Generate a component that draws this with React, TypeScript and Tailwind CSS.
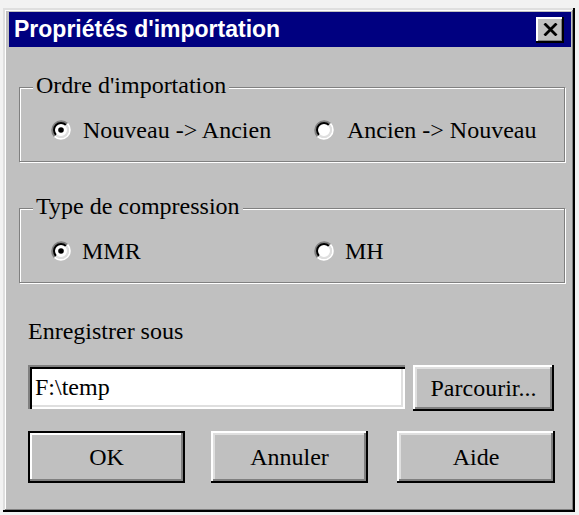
import React from "react";

const serif = "font-['Liberation_Serif','Times_New_Roman',serif]";

function Radio({ checked = false }: { checked?: boolean }) {
  return (
    <svg width="20" height="20" viewBox="0 0 20 20" className="shrink-0">
      <circle cx="10" cy="10" r="6.5" fill="#fff" />
      <path d="M3.64 16.36 A9 9 0 0 1 16.36 3.64" fill="none" stroke="#808080" strokeWidth="2" />
      <path d="M16.36 3.64 A9 9 0 0 1 3.64 16.36" fill="none" stroke="#fff" strokeWidth="2" />
      <path d="M5.05 14.95 A7 7 0 0 1 14.95 5.05" fill="none" stroke="#000" strokeWidth="2" />
      <path d="M14.95 5.05 A7 7 0 0 1 5.05 14.95" fill="none" stroke="#dfdfdf" strokeWidth="2" />
      {checked && <circle cx="10" cy="10" r="2.8" fill="#000" />}
    </svg>
  );
}

function GroupBox({ label, children }: { label: string; children: React.ReactNode }) {
  return (
    <div className="relative ml-[10px] mr-[6px] h-[75px] border border-[#808080] shadow-[inset_1px_1px_0_#fff,1px_1px_0_#fff]">
      <span className="absolute left-[13px] top-[-15px] bg-[#c0c0c0] px-[3px] leading-[24px]">
        {label}
      </span>
      {children}
    </div>
  );
}

function Button({
  label,
  width,
  height,
  isDefault = false,
  className = "",
}: {
  label: string;
  width: string;
  height: string;
  isDefault?: boolean;
  className?: string;
}) {
  return (
    <button
      className={`${width} ${height} ${className} flex items-center justify-center bg-[#c0c0c0] leading-[24px] ${
        isDefault
          ? "border-2 border-black shadow-[inset_-2px_-2px_0_#808080,inset_2px_2px_0_#fff]"
          : "shadow-[inset_-2px_-2px_0_#000,inset_2px_2px_0_#fff,inset_-4px_-4px_0_#808080,inset_4px_4px_0_#dfdfdf]"
      }`}
    >
      {label}
    </button>
  );
}

export default function App() {
  return (
    <div className="min-h-screen bg-[#f2f2f2] pl-[3px] pt-[8px]">
      <div
        className={`flex h-[504px] w-[572px] flex-col bg-[#c0c0c0] pb-[4px] pl-[6px] pr-[4px] pt-[4px] text-[24px] text-black ${serif} shadow-[inset_-2px_-2px_0_#000,inset_2px_2px_0_#dfdfdf,inset_-3px_-3px_0_#808080,inset_3px_3px_0_#fff]`}
      >
        {/* title bar */}
        <div className="flex h-[35px] shrink-0 items-center justify-between bg-[#000080] pl-[5px] pr-[7px]">
          <span className="font-['Liberation_Sans',Arial,sans-serif] text-[23px] font-bold leading-none text-white">
            Propriétés d'importation
          </span>
          <button className="flex h-[26px] w-[28px] items-center justify-center bg-[#c0c0c0] shadow-[inset_-2px_-2px_0_#000,inset_2px_2px_0_#fff,inset_-3px_-3px_0_#808080]">
            <svg width="15" height="13" viewBox="0 0 15 13" className="mb-[1px]">
              <path d="M1.5 0.5 L13.5 12.5 M13.5 0.5 L1.5 12.5" stroke="#000" strokeWidth="2.8" />
            </svg>
          </button>
        </div>

        <div className="flex flex-col">
          <div className="mt-[40px]">
            <GroupBox label="Ordre d'importation">
              <div className="flex items-center pl-[31px] pt-[30px] leading-[24px]">
                <div className="flex w-[263px] items-center">
                  <Radio checked />
                  <span className="ml-[12px]">Nouveau -&gt; Ancien</span>
                </div>
                <div className="flex items-center">
                  <Radio />
                  <span className="ml-[13px]">Ancien -&gt; Nouveau</span>
                </div>
              </div>
            </GroupBox>
          </div>

          <div className="mt-[46px]">
            <GroupBox label="Type de compression">
              <div className="flex items-center pl-[31px] pt-[30px] leading-[24px]">
                <div className="flex w-[263px] items-center">
                  <Radio checked />
                  <span className="ml-[11px]">MMR</span>
                </div>
                <div className="flex items-center">
                  <Radio />
                  <span className="ml-[11px]">MH</span>
                </div>
              </div>
            </GroupBox>
          </div>

          <div className="ml-[19px] mt-[36px] leading-[24px]">Enregistrer sous</div>

          <div className="ml-[19px] mt-[22px] flex items-start">
            <div className="flex h-[44px] w-[377px] items-center bg-white pl-[7px] leading-[24px] shadow-[inset_2px_2px_0_#808080,inset_4px_4px_0_#000,inset_-2px_-2px_0_#fff,inset_-4px_-4px_0_#dfdfdf]">
              F:\temp
            </div>
            <Button label="Parcourir..." width="w-[141px]" height="h-[46px]" className="ml-[8px]" />
          </div>

          <div className="ml-[19px] mt-[20px] flex">
            <Button label="OK" width="w-[157px]" height="h-[52px]" isDefault />
            <Button label="Annuler" width="w-[157px]" height="h-[52px]" className="ml-[26px]" />
            <Button label="Aide" width="w-[158px]" height="h-[52px]" className="ml-[29px]" />
          </div>
        </div>
      </div>
    </div>
  );
}
